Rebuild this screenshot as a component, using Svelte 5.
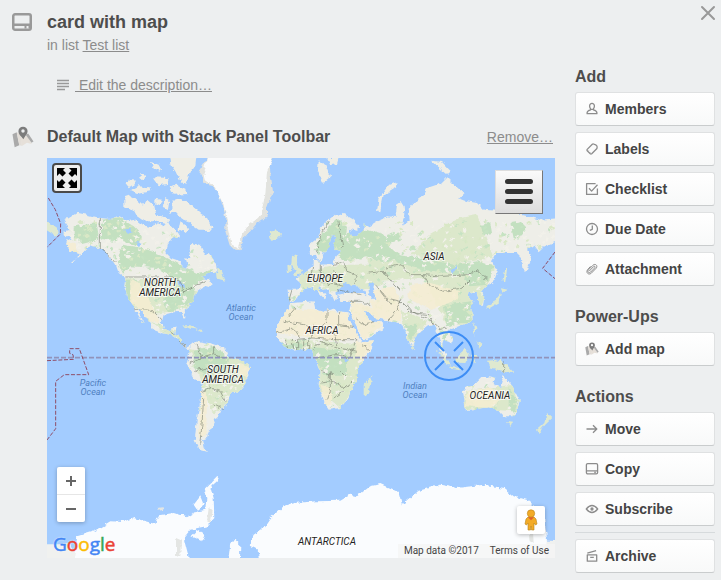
<script>
  const groups = [
    { title: 'Add', items: [['Members', 'member'], ['Labels', 'label'], ['Checklist', 'check'], ['Due Date', 'clock'], ['Attachment', 'clip']] },
    { title: 'Power-Ups', items: [['Add map', 'map']] },
    { title: 'Actions', items: [['Move', 'arrow'], ['Copy', 'card'], ['Subscribe', 'eye']], last: ['Archive', 'archive'] }
  ];

  // Coastlines, drawn on a 1524 x 1200 world grid
  const continents = [
    // North America
    'M50 190L66 180 90 164 120 170 160 180 190 183 215 175 235 188 262 182 285 200 310 206 335 195 350 205 362 190 370 205 385 212 400 235 378 238 362 260 358 285 372 300 400 310 412 335 422 325 415 300 430 300 425 270 435 255 462 264 475 290 485 285 500 305 508 320 508 345 485 345 465 360 480 362 500 375 485 390 470 385 450 400 440 415 435 435 410 455 416 480 410 482 403 462 380 463 350 470 344 495 348 512 370 520 373 508 388 506 384 530 405 540 403 555 420 568 434 560 425 574 408 562 395 545 370 530 345 525 318 515 310 498 290 465 275 455 280 475 293 495 285 490 268 462 262 448 240 415 232 385 235 360 215 345 208 325 190 300 175 280 150 268 130 262 115 272 100 290 72 314 70 310 90 300 95 285 70 278 58 262 60 248 75 240 50 232 50 222 68 215Z',
    // South America
    'M432 560L455 550 500 558 535 570 545 600 590 610 612 628 605 650 590 680 575 700 550 708 535 745 520 757 512 778 500 784 505 800 485 815 480 840 465 845 470 870 480 882 455 875 443 850 450 780 462 720 465 680 440 660 418 620 425 595Z',
    // Europe and Asia
    'M785 262L812 240 825 205 845 185 870 165 895 170 920 185 935 205 930 218 905 212 915 235 930 234 950 218 950 196 965 205 990 190 1020 178 1045 180 1050 140 1062 132 1070 145 1072 165 1065 205 1088 188 1085 155 1110 125 1130 110 1140 90 1185 75 1200 60 1215 75 1250 105 1235 120 1260 130 1290 135 1310 155 1350 158 1400 165 1480 185 1540 180 1540 245 1490 265 1475 280 1460 260 1440 275 1455 300 1440 335 1430 340 1425 300 1410 285 1350 285 1335 310 1352 340 1340 370 1320 385 1302 400 1312 415 1308 440 1298 440 1290 410 1268 400 1265 415 1282 430 1270 445 1280 475 1260 495 1235 505 1210 510 1200 520 1220 540 1215 555 1200 550 1190 545 1186 560 1200 590 1195 600 1180 575 1178 545 1170 520 1160 500 1140 505 1120 520 1105 535 1098 565 1085 560 1075 520 1065 500 1040 490 1010 485 985 480 965 462 950 458 965 482 985 497 1000 485 1012 498 1000 520 960 540 945 545 930 510 915 480 908 455 912 432 880 432 873 410 900 405 945 405 962 412 950 395 920 378 905 390 885 385 868 400 872 420 860 430 848 405 820 385 812 390 835 408 832 425 810 402 795 387 770 395 760 405 745 425 725 434 722 395 755 395 760 375 745 362 770 345 790 330 800 325 800 305 815 308 820 320 860 318 865 295 882 280 868 275 858 262 865 240 858 228 850 248 845 270 830 285 822 310 812 305 808 290 790 292Z',
    // Africa
    'M735 435L800 430 805 452 830 462 840 450 870 460 905 463 905 480 930 530 945 553 980 550 975 572 950 610 930 640 930 670 915 690 905 720 880 750 845 755 835 740 815 680 818 640 805 600 795 578 770 573 740 578 710 565 690 540 690 500 715 460Z',
    // Australia
    'M1248 700L1258 690 1285 675 1300 660 1325 655 1345 660 1340 675 1360 688 1370 650 1382 670 1405 700 1418 725 1410 760 1395 775 1370 775 1355 755 1325 748 1290 752 1257 757Z',
  ];
  const islands = [
    'M232 118L250 112 265 120 290 142 300 125 318 140 325 170 345 175 370 185 360 198 320 190 300 190 285 185 270 175 262 160 232 150Z',
    'M378 125L395 122 420 130 440 148 460 165 480 180 497 210 485 225 470 215 455 215 440 205 425 190 405 182 385 160 370 165Z',
    'M365 -20L450 -20 445 25 428 45 418 78 398 66 385 40 370 18Z', 'M368 88L385 80 415 95 418 108 380 110Z',
    'M245 65L270 68 262 80 240 88ZM250 98L275 85 308 88 310 100 270 108ZM282 45L296 55 290 68 280 60ZM312 12L335 20 345 40 320 32ZM318 58L365 60 360 78 335 82ZM325 122L345 125 338 145 325 140ZM355 120L368 125 362 160 350 150ZM400 190L430 212 415 225 395 215Z',
    'M735 290L752 295 748 310 765 338 758 350 738 352 746 336 733 318ZM718 325L733 320 735 338 720 343Z',
    'M665 222L688 217 702 230 690 242 672 245Z', 'M950 708L950 680 975 655 970 690 960 712Z',
    'M815 10L835 20 850 60 830 75 812 40ZM840 0L875 0 870 18 850 22Z', 'M990 160L995 120 1025 82 1052 72 1045 88 1010 110 1000 160Z',
    'M1155 8L1185 12 1210 38 1200 48 1178 30Z',
    'M1372 330L1380 330 1375 375 1366 370ZM1362 388L1382 392 1366 404ZM1365 405L1358 432 1320 455 1318 445 1345 430ZM1278 492L1285 510 1282 535ZM1290 550L1305 562 1298 572Z',
    'M1168 572L1190 592 1212 622 1200 622ZM1205 625L1245 632 1240 637 1210 632ZM1225 605L1235 590 1255 572 1268 590 1255 615 1232 614ZM1272 590L1290 592 1280 618Z',
    'M1320 608L1345 606 1378 618 1402 646 1380 640 1330 632Z', 'M1380 792L1395 794 1390 806ZM1500 765L1516 780 1495 800 1475 825 1470 815 1492 795Z',
    'M405 502L430 502 452 515 430 512ZM452 514L468 516 460 522ZM1095 560L1102 570 1096 576ZM-20 180L0 192 35 218 30 235 0 215ZM508 325L525 340 535 368 512 362Z'
  ];
  const woods = [
    'M165 185L215 178 260 205 285 230 270 262 225 250 165 240Z', 'M80 205L150 195 155 245 105 258 80 240Z', 'M225 260L290 270 350 295 400 320 450 345 505 335 480 358 430 390 385 365 330 330 250 325 228 350 210 310Z',
    'M235 365L270 365 250 400 260 440 238 415Z', 'M390 375L445 375 440 430 400 455 360 460 345 430Z', 'M440 575L500 565 550 600 530 640 480 650 440 630Z',
    'M800 275L825 230 845 205 870 180 900 210 890 270 850 290Z', 'M900 225L960 215 1010 230 1030 270 1060 290 1020 315 960 295 900 310 870 295Z',
    'M1020 275L1040 290 1130 300 1220 320 1240 350 1130 335 1060 320ZM1020 235L1050 225 1065 245 1020 260Z', 'M1390 195L1420 190 1440 210 1415 245 1400 240Z',
    'M1230 320L1290 310 1340 325 1320 380 1270 385 1240 345Z', 'M1190 440L1275 430 1270 490 1200 505Z', 'M790 570L900 580 900 650 830 650Z', 'M1385 690L1415 730 1400 765 1385 740Z', 'M700 555L770 560 760 580 715 570Z', 'M1180 515L1200 530 1190 560Z', 'M1070 500L1110 500 1095 550Z', 'M1300 200L1330 195 1335 225 1310 230Z'
  ];
  const meadows = [
    'M235 360L400 370 450 400 440 440 345 465 300 470 250 440Z', 'M430 570L610 610 590 700 500 770 470 700 460 660Z', 'M755 345L880 320 980 320 1010 380 930 400 760 400Z',
    'M960 300L1340 320 1320 400 1280 500 1200 500 1130 360 980 370Z', 'M700 540L960 560 930 680 880 750 820 700 810 600Z', 'M1255 700L1400 680 1415 760 1250 750Z', 'M1060 455L1140 490 1100 560 1080 550Z', 'M310 490L400 520 420 565 350 525Z', 'M1150 230L1240 180 1290 170 1340 300 1200 320 1090 290Z'
  ];
  const deserts = [
    'M700 450L900 465 940 540 860 548 690 525Z', 'M912 430L985 450 1005 500 950 545 915 480Z', 'M970 430L1060 430 1060 490 990 480Z',
    'M1095 380L1150 375 1240 400 1230 425 1150 455 1080 420Z', 'M250 365L275 375 310 430 340 495 310 490 250 430Z', 'M1260 700L1340 690 1360 730 1330 750 1255 745Z', 'M820 680L855 690 850 745 835 735Z', 'M930 550L980 550 950 610 925 590Z', 'M580 615L612 628 595 660 570 640Z', 'M463 700L480 700 478 830 455 840Z', 'M55 250L85 255 95 285 60 275Z', 'M970 400L1040 385 1060 430 985 430Z'
  ];
  const borders = 'M160 180V272L180 285 205 315M235 357H380L405 375 410 402 445 382 480 368M265 455L315 457 345 485M370 520L385 530M395 548L415 565M845 190L822 230 808 285M870 180L880 230 888 270M860 320L890 310 900 340 930 350 920 375M800 325L795 355 820 370 850 380M820 320V350L860 365M735 395L725 430M850 375L890 385M905 430L940 430 970 440M1020 330L1060 320 1090 350 1130 350 1190 355 1265 350 1290 335 1320 365M1130 350L1150 385 1190 400 1245 390 1270 365M965 345L1010 340 1040 380 1060 400M985 380L1020 420 1060 430 1090 460 1140 480 1180 510M1020 490L1050 455 1065 420M1080 440L1100 465 1150 470M1175 515L1200 510M925 480L950 500 985 490M720 480L745 450M710 490L770 500 800 520 840 490 840 452M875 460V500L920 505M690 525L740 510 760 540M740 575L735 545 800 540 860 545 930 545M770 575V550M800 575L820 550 870 570 930 580M805 600L870 590 905 600M820 675L860 670 890 690 915 670M850 640V700L840 725M880 640L900 660M860 720L890 700M820 640L860 650M450 560L465 600 425 615M465 600L500 590 530 600M500 590V565M440 640L480 630 490 690 465 700M490 690L520 700 535 730M470 720L465 800 458 860M500 740L530 755M1370 610V638M945 560L965 575M870 395L940 410M800 500L795 540M860 505L870 570M930 545L905 600M715 545L725 570M752 545V576M785 545V575M860 340L870 365M775 350L790 370M835 355L850 350M1000 400L1030 440M1150 480L1160 500';
  // Repeatable flecks of terrain, clipped to the land
  let seed = 17;
  const rnd = () => (seed = (seed * 16807) % 2147483647) / 2147483647;
  const flecks = Array.from({ length: 2600 }, () => {
    const x = Math.round(rnd() * 1524), y = Math.round(rnd() * 620 + 190), w = 3 + Math.round(rnd() * 9), h = 2 + Math.round(rnd() * 5), k = rnd();
    return { d: `M${x} ${y}l${w} ${-h} ${h} ${h} ${-w} ${h}z`, fill: k < 0.5 ? '#f2f1ea' : k < 0.74 ? '#c6e3c3' : '#d9e8c6' };
  });
  const labels = [
    [113, 128, ['NORTH', 'AMERICA']], [176, 215, ['SOUTH', 'AMERICA']], [278, 124, ['EUROPE']], [275, 176, ['AFRICA']], [387, 102, ['ASIA']], [443, 241, ['OCEANIA']], [280, 387, ['ANTARCTICA']]
  ];
  const seas = [[194, 153, ['Atlantic', 'Ocean']], [46, 228, ['Pacific', 'Ocean']], [368, 231, ['Indian', 'Ocean']]];
</script>

{#snippet icon(name)}
  <svg class="icon" viewBox="0 0 14 14" aria-hidden="true">
    {#if name === 'member'}
      <path d="M4.600 4.100a2.400 2.800 0 1 1 4.800 0c0 1.300-.5 2.200-1 2.800v.9c1.900.5 3.500 1 3.500 3v.9H2.100v-.9c0-2 1.600-2.500 3.500-3v-.9c-.5-.6-1-1.500-1-2.800zM5.600 7.300h2.800" />
    {:else if name === 'label'}
      <path d="M2.200 7.400 7.300 2.300q.5-.5 1.200-.3l2.700 1.200q.7.400.8 1.100l.1 1.500q0 .6-.4 1L6.700 11.800q-.7.500-1.400 0L2.200 8.800q-.6-.7 0-1.400z" /><path d="M3.700 8.700v.2M5.400 10.300v.2" />
    {:else if name === 'check'}
      <path d="M12.400 6.500v5.900H1.600V1.600h9M4 6.300l2.600 2.800 5.900-6.300" />
    {:else if name === 'clock'}
      <circle cx="7" cy="7" r="5.500" /><path d="M7.300 3.500v3.800L4.800 8.400" />
    {:else if name === 'clip'}
      <path stroke-width="1" d="m4.200 9.100 4.400-4.500c1-.9 2.100.1 1.200 1.200L5.700 10c-1.900 1.600-3.700-.3-2.300-2.100l4.500-4.600c2.300-2.200 5.300.2 3.300 2.900l-5 5.100c-2.700 2-5.500-.6-3.700-3.500l3-3.400" />
    {:else if name === 'arrow'}
      <path d="M1.500 7h10.200M8 3.200 11.800 7 8 10.800" />
    {:else if name === 'card'}
      <rect x="1.400" y="1.700" width="11.200" height="10.200" rx="1.300" /><path d="M1.400 8.900h11.200M9.300 10.500h1.500" />
    {:else if name === 'eye'}
      <path d="M1.300 7q5.700-7 11.400 0-5.700 7-11.400 0z" /><circle cx="7" cy="7" r="1" fill="#8c8c8c" />
    {:else if name === 'archive'}
      <path d="M2.300 5.900h9.400v6.300H2.300zM2.300 4.100l8.800-2.400M5.200 8.300h3.600" />
    {:else}
      {@render mapShapes()}
    {/if}
  </svg>
{/snippet}

{#snippet mapShapes()}
  <g stroke="none">
    <path d="M.3 5.200 3 4l1.600 8.200-2.900 1.400z" fill="#aaa" /><path d="m3 4 3 1.400.3 7.200-1.700-.4z" fill="#e3ded8" />
    <path d="m5.500 8 4-1.800 3.100 5.200-3.100-.7-3.200 2z" fill="#e6e0d9" /><path d="m8.700 5.500 1.600-.8 3.400 5.100-1.300.9z" fill="#aaa" />
    <path fill-rule="evenodd" d="M7 .4a2.900 2.900 0 0 1 2.900 3C9.900 5.400 8 6.500 7.300 8.500 6 6.700 4.100 5.500 4.100 3.400A2.900 2.900 0 0 1 7 .4zm0 1.700a1.100 1.100 0 1 0 0 2.200 1.100 1.100 0 0 0 0-2.200z" fill="#7c7c7c" />
  </g>
{/snippet}

{#snippet action(item)}
  <button class="action" type="button">{@render icon(item[1])}<span>{item[0]}</span></button>
{/snippet}

<div class="dialog">
  <button class="close" type="button" aria-label="Close"><svg viewBox="0 0 16 16"><path d="m2 2 12 12M14 2 2 14" /></svg></button>
  <main>
    <header>
      <svg class="card-icon" viewBox="0 0 20 18" aria-hidden="true"><rect x="1.250" y="1.250" width="17.500" height="15.500" rx="1.800" /><path d="M1 11.800h18M12.500 14.300h2M16.500 14.300h2" /></svg>
      <h1>card with map</h1>
      <p>in list <a href="#list">Test list</a></p>
    </header>
    <a class="describe" href="#description">
      <svg viewBox="0 0 12 12" aria-hidden="true"><path d="M0 1.500h12M0 4.500h12M0 7.500h12M0 10.500h8" /></svg><span>&nbsp;Edit the description…</span>
    </a>
    <section>
      <div class="section-head">
        <svg class="map-icon" viewBox="0 0 14 14" aria-hidden="true">{@render mapShapes()}</svg>
        <h2>Default Map with Stack Panel Toolbar</h2>
        <a href="#remove">Remove…</a>
      </div>
      <div class="map">
        <svg class="world" viewBox="0 0 508 400" preserveAspectRatio="xMidYMid slice" role="img" aria-label="World map">
          <defs>
            <filter id="rough" filterUnits="userSpaceOnUse" x="-10" y="-10" width="528" height="420"><feTurbulence type="fractalNoise" baseFrequency=".18" numOctaves="3" seed="4" /><feDisplacementMap in="SourceGraphic" scale="5" xChannelSelector="R" yChannelSelector="G" /></filter>
            <clipPath id="land">{#each continents as d}<path {d} />{/each}</clipPath>
          </defs>
          <g filter="url(#rough)">
            <rect x="-20" y="-20" width="548" height="440" fill="#a3ccff" />
            <g transform="scale(.33333)">
              {#each continents as d}<path {d} fill="#eeeee8" />{/each}
              <g clip-path="url(#land)">
                {#each meadows as d}<path {d} fill="#dce8cb" />{/each}
                {#each woods as d}<path {d} fill="#c3e0c0" />{/each}
                {#each flecks as f}<path d={f.d} fill={f.fill} />{/each}
                {#each deserts as d}<path {d} fill="#f5edd2" opacity=".88" />{/each}
              </g>
              {#each islands as d, i}<path {d} fill={i < 5 || (i > 7 && i < 11) ? '#efeee6' : '#dfe9d0'} />{/each}
              <path fill="#a3ccff" d="M885 388L895 375 928 390 920 402 890 400ZM965 378L982 375 978 395 988 425 975 425 965 400ZM228 215L250 212 255 222 240 228ZM262 250L285 258 275 264ZM390 368L405 372 415 388 398 385ZM1210 340L1228 318 1230 325 1215 345ZM893 600L903 602 900 612 890 608Z" />
              <path fill="#e2e3df" d="M455 40L475 10 485 -20 690 -20 668 20 672 60 678 100 660 150 660 175 630 195 610 220 590 240 580 277 562 275 548 262 535 220 535 180 530 150 515 110 500 85 472 78 468 55Z" />
              <path fill="#fafbfc" d="M470 40L485 -20 685 -20 660 40 655 110 640 175 605 200 585 230 572 270 555 262 544 220 538 180 530 140 515 110 502 80 480 75Z" />
              <path fill="#f0f1ef" d="M-20 1159H70L120 1240H-20ZM1470 1145L1540 1150V1240H1440Z" />
              <path fill="#fafcfe" d="M100 1240L85 1200 90 1135 140 1120 190 1090 230 1092 260 1080 325 1098 335 1072 380 1065 420 1078 450 1060 475 1055 478 1020 470 995 485 980 510 955 515 962 490 985 500 1020 502 1080 480 1105 430 1115 410 1140 425 1200V1240ZM440 1040L460 1015 470 1040 450 1055ZM430 1135L450 1115 475 1130 465 1150ZM540 1240L550 1155 565 1145 580 1160 578 1240ZM640 1240L632 1175 605 1162 620 1130 650 1110 670 1080 710 1045 740 1035 810 1030 880 1028 910 1010 930 1015 970 985 1000 978 1055 1003 1065 1040 1110 1000 1180 980 1230 990 1310 980 1370 990 1400 1015 1450 1030 1490 1070 1500 1140 1490 1240Z" />
              <path fill="#e4e6e4" d="M328 1050L350 1048 352 1056 332 1058ZM390 1140L402 1145 400 1195 390 1190ZM485 1050L497 1060 490 1095 480 1090ZM1445 1115L1458 1120 1460 1155 1448 1150Z" />
              <path d={borders} fill="none" stroke="#747b6d" stroke-width="3" opacity=".6" />
            </g>
          </g>
          <g transform="scale(.33333)" fill="none">
            <path d="M0 599H1524" stroke="#9193bb" stroke-width="5" stroke-dasharray="15 6" />
            <path d="M4 120L25 155 41 197 40 228 0 268M1524 282L1487 331 1524 362M0 608L80 604 78 590 68 586V572H97L125 650H52L26 670V812L0 846" stroke="#8f4c66" stroke-width="3" stroke-dasharray="12 5" />
          </g>
          <g class="target"><circle cx="402" cy="198" r="24" /><path d="m388 184 9 9M416 184l-9 9M388 212l9-9M416 212l-9-9" /></g>
          {#each labels as [x, y, lines]}
            <text class="place" {x} {y}>{#each lines as line, i}<tspan {x} y={y + i * 10}>{line}</tspan>{/each}</text>
          {/each}
          {#each seas as [x, y, lines]}
            <text class="sea" {x} {y}>{#each lines as line, i}<tspan {x} y={y + i * 9}>{line}</tspan>{/each}</text>
          {/each}
        </svg>
        <button class="expand" type="button" aria-label="Full screen">
          <svg viewBox="2 2 26 26"><path d="M5 5h8l-2 2 3 3-3.500 3.500-3-3-2.500 2.500zM25 5v8l-2-2-3 3-3.500-3.500 3-3L17 5zM5 25v-8l2 2 3-3 3.500 3.500-3 3L13 25zM25 25h-8l2-2-3-3 3.500-3.500 3 3L25 17z" /></svg>
        </button>
        <button class="menu" type="button" aria-label="Toolbar"><svg viewBox="0 0 30 28"><path d="M3.500 3.500h23M3.500 13.500h23M3.500 23.500h23" /></svg></button>
        <div class="zoom">
          <button type="button" aria-label="Zoom in"><svg viewBox="0 0 12 12"><path d="M6 1v10M1 6h10" /></svg></button>
          <button type="button" aria-label="Zoom out"><svg viewBox="0 0 12 12"><path d="M1 6h10" /></svg></button>
        </div>
        <button class="person" type="button" aria-label="Street View">
          <svg viewBox="0 0 14 22"><path d="M4 8h6l2 2 1 5-1.500 1L10 14v7H7.500L7 17l-.5 4H4v-7l-1.500 2L1 15l1-5z" fill="#f3ab27" stroke="#b8841c" stroke-width=".6" /><circle cx="7" cy="4.500" r="3.700" fill="#f3ab27" stroke="#b8841c" stroke-width=".6" /><path d="m4 8.200 3 3 3-3z" fill="#e0612c" /></svg>
        </button>
        <div class="google" aria-label="Google"><b>G</b><b>o</b><b>o</b><b>g</b><b>l</b><b>e</b></div>
        <div class="legal"><span>Map data ©2017</span><a href="#terms">Terms of Use</a></div>
      </div>
    </section>
  </main>
  <aside>
    {#each groups as group}
      <section class="group">
        <h3>{group.title}</h3>
        {#each group.items as item}{@render action(item)}{/each}
        {#if group.last}<hr />{@render action(group.last)}{/if}
      </section>
    {/each}
  </aside>
</div>

<style>
  :global(body) { background: #edeff0; }
  .dialog { position: relative; display: grid; grid-template-columns: minmax(0, 1fr) 140px; gap: 20px; padding: 0 6px 6px 0; background: #edeff0; color: #4d4d4d; font: 14px/20px "Liberation Sans", Arial, sans-serif; }
  button { font: inherit; color: inherit; padding: 0; border: 0; cursor: pointer; }
  h1, h2, h3, p { margin: 0; }
  a, p { color: #8c8c8c; }
  svg { display: block; }
  main { padding: 10px 0 0 12px; }
  header { display: grid; grid-template-columns: 20px 1fr; column-gap: 15px; align-items: center; }
  header p { grid-column: 2; line-height: 22px; }
  h1 { font-size: 18px; line-height: 24px; }
  .card-icon { width: 20px; height: 18px; fill: none; stroke: #999; stroke-width: 2.5; }
  .describe { display: flex; align-items: center; width: max-content; margin: 19px 0 0 45px; text-decoration: none; }
  .describe span { text-decoration: underline; }
  .describe svg { width: 12px; height: 12px; margin-right: 6px; stroke: #999; stroke-width: 1.4; }
  .section-head { display: grid; grid-template-columns: 22px 1fr auto; align-items: center; column-gap: 13px; margin: 31px 2px 0 0; height: 20px; }
  .map-icon { width: 22px; height: 22px; }
  h2, h3 { font-size: 16px; line-height: 20px; }
  .map { position: relative; height: 400px; margin: 12px 0 0 35px; overflow: hidden; background: #a3ccff; font-family: Roboto, sans-serif; }
  .world { width: 100%; height: 100%; }
  .target { fill: none; stroke: #3d8df5; stroke-width: 2; }
  .place, .sea { text-anchor: middle; font-style: italic; font-size: 10px; }
  .place { fill: #222; stroke: #fff; stroke-width: 2px; stroke-opacity: .7; paint-order: stroke; }
  .sea { fill: #4f7fc0; font-size: 9px; }
  .map > button { position: absolute; display: grid; place-items: center; }
  .map .expand { left: 5px; top: 5px; width: 30px; height: 30px; border: 2px solid #4a4a4a; border-radius: 4px; background: #eee; }
  .expand svg { width: 26px; height: 26px; }
  .map .menu { right: 12px; top: 12px; width: 48px; height: 44px; border: 1px solid #777; border-color: #ddd #777 #777 #ddd; background: linear-gradient(#fafafa, #ddd); }
  .menu svg { width: 30px; height: 28px; stroke: #333; stroke-width: 5; stroke-linecap: round; }
  .zoom { position: absolute; left: 10px; bottom: 36px; width: 28px; border-radius: 2px; background: #fff; box-shadow: 0 1px 4px #0004; }
  .zoom button { display: grid; place-items: center; width: 28px; height: 27px; background: none; }
  .zoom button + button { border-top: 1px solid #e6e6e6; height: 28px; }
  .zoom svg { width: 12px; height: 12px; stroke: #666; stroke-width: 2; }
  .map .person { right: 10px; bottom: 24px; width: 28px; height: 28px; border-radius: 2px; background: #fff; box-shadow: 0 1px 4px #0004; }
  .person svg { width: 14px; height: 22px; }
  .google { position: absolute; left: 6px; bottom: 2px; font: 19px/24px "Open Sans", Lato, sans-serif; text-shadow: 0 0 2px #fff; }
  .google b { font-weight: 400; color: #4285f4; -webkit-text-stroke: 0.5px currentColor; }
  .google b:nth-child(2), .google b:nth-child(6) { color: #ea4335; }
  .google b:nth-child(3) { color: #fbbc05; }
  .google b:nth-child(5) { color: #34a853; }
  .legal { position: absolute; right: 0; bottom: 0; display: flex; font-size: 10px; line-height: 14px; }
  .legal > * { padding: 0 6px; background: #f5f5f5cc; color: #444; text-decoration: none; }
  .legal span { padding-right: 5px; }
  aside { padding-top: 67px; }
  .group + .group { margin-top: 21px; }
  h3 { margin-bottom: 5px; }
  .action { display: flex; align-items: center; gap: 6px; width: 100%; height: 34px; padding-left: 9px; border: 1px solid #dfe1e2; border-bottom-color: #c9cccd; border-radius: 3px; background: linear-gradient(#fff, #f8f9f9); font-weight: 700; color: #444; }
  .action + .action { margin-top: 6px; }
  .icon { width: 14px; height: 14px; fill: none; stroke: #8c8c8c; stroke-width: 1.3; stroke-linejoin: round; }
  hr { height: 1px; margin: 6px 0; border: 0; background: #d6dadc; }
  .close { position: absolute; right: 5px; top: 5px; width: 16px; height: 16px; background: none; }
  .close svg { width: 16px; height: 16px; stroke: #999; stroke-width: 2; stroke-linecap: round; }
</style>
